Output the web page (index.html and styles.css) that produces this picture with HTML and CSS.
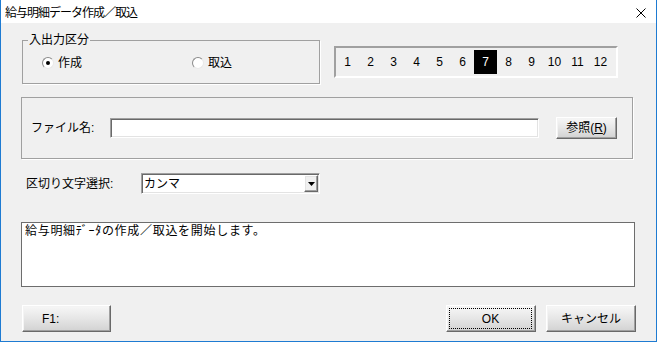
FILE: index.html
```html
<!DOCTYPE html>
<html lang="ja">
<head>
<meta charset="utf-8">
<title>給与明細データ作成／取込</title>
<link rel="stylesheet" href="styles.css">
</head>
<body>
<div class="window">
  <div class="titlebar">
    <span class="title">給与明細データ作成／取込</span>
    <span class="close"><svg width="10" height="10" viewBox="0 0 10 10"><path d="M0.5 0.5 L9.5 9.5 M9.5 0.5 L0.5 9.5" stroke="#000" stroke-width="1" fill="none"/></svg></span>
  </div>
  <div class="content">
    <div class="row-top">
      <div class="group io">
        <div class="legend">入出力区分</div>
        <div class="radios">
          <label class="radio-item first"><span class="radio checked"></span><span>作成</span></label>
          <label class="radio-item"><span class="radio"></span><span>取込</span></label>
        </div>
      </div>
      <div class="months">
        <span class="m">1</span><span class="m">2</span><span class="m">3</span><span class="m">4</span><span class="m">5</span><span class="m">6</span><span class="m sel">7</span><span class="m">8</span><span class="m">9</span><span class="m">10</span><span class="m">11</span><span class="m">12</span>
      </div>
    </div>
    <div class="group file">
      <span class="file-label">ファイル名:</span>
      <span class="input"></span>
      <span class="btn browse">参照(<u>R</u>)</span>
    </div>
    <div class="row-sep">
      <span class="sep-label">区切り文字選択:</span>
      <span class="combo"><span class="combo-text">カンマ</span><span class="combo-btn"><svg width="7" height="4" viewBox="0 0 7 4"><path d="M0 0 H7 L3.5 4 Z" fill="#000"/></svg></span></span>
    </div>
    <div class="message">給与明細ﾃﾞｰﾀの作成／取込を開始します。</div>
    <div class="row-buttons">
      <span class="btn f1">F1:</span>
      <span class="btn ok"><span class="focus">OK</span></span>
      <span class="btn cancel">キャンセル</span>
    </div>
  </div>
</div>
</body>
</html>
```
FILE: styles.css
```css
* { box-sizing: border-box; }
html, body { margin: 0; padding: 0; }
body {
  width: 657px;
  height: 342px;
  overflow: hidden;
  background: #f0f0f0;
  font-family: "Liberation Sans", "Noto Sans CJK JP", sans-serif;
  font-size: 12px;
  color: #000;
}
.window {
  width: 657px;
  height: 342px;
  border: 1px solid #1e7bd2;
  border-top: 0;
  background: #f0f0f0;
  display: flex;
  flex-direction: column;
}
.titlebar {
  height: 23px;
  background: #fff;
  display: flex;
  align-items: center;
  justify-content: space-between;
  padding: 3px 0 0 4px;
}
.title { letter-spacing: -1px; line-height: 14px; }
.close {
  width: 30px;
  height: 20px;
  display: flex;
  align-items: center;
  justify-content: center;
}
.close svg { display: block; }
.content {
  padding: 10px 20px 0 20px;
  display: flex;
  flex-direction: column;
}
.row-top { display: flex; align-items: flex-start; }
.group {
  border: 1px solid #a0a0a0;
  box-shadow: 1px 1px 0 #fff;
}
.io {
  margin: 7px 0 0 1px;
  width: 298px;
  height: 44px;
}
.legend {
  margin: -8px 0 0 5px;
  padding: 0 1px;
  width: fit-content;
  background: #f0f0f0;
  line-height: 15px;
}
.radios {
  display: flex;
  margin-top: 8px;
  height: 14px;
  align-items: center;
}
.radio-item {
  display: flex;
  align-items: center;
  gap: 4px;
  line-height: 14px;
}
.radio-item.first { margin-left: 19px; width: 150px; }
.radio {
  width: 12px;
  height: 12px;
  border-radius: 50%;
  border: 1px solid;
  border-color: #8a8a8a #e8e8e8 #e8e8e8 #8a8a8a;
  background: #fff;
  display: flex;
  align-items: center;
  justify-content: center;
}
.radio.checked::before {
  content: "";
  width: 4px;
  height: 4px;
  border-radius: 50%;
  background: #000;
}
.months {
  margin: 13px 0 0 14px;
  width: 284px;
  height: 32px;
  border: 2px solid;
  border-color: #a0a0a0 #fff #fff #a0a0a0;
  padding-top: 2px;
  display: flex;
}
.m {
  width: 23px;
  height: 24px;
  line-height: 24px;
  text-align: center;
}
.m.sel { background: #000; color: #fff; }
.file {
  margin-top: 13px;
  width: 612px;
  height: 62px;
  display: flex;
  align-items: center;
  padding-left: 9px;
}
.file-label { width: 79px; line-height: 14px; }
.input {
  width: 429px;
  height: 20px;
  background: #fff;
  border: 1px solid;
  border-color: #a0a0a0 #fff #fff #a0a0a0;
  box-shadow: inset 1px 1px 0 #696969, inset -1px -1px 0 #e3e3e3;
}
.btn {
  display: flex;
  align-items: center;
  justify-content: center;
  background: linear-gradient(#f7f7f7, #e6e6e6 50%, #d2d2d2);
  border: 1px solid;
  border-color: #fff #696969 #696969 #fff;
  box-shadow: inset -1px -1px 0 #a0a0a0, inset 1px 1px 0 #f4f4f4;
  line-height: 14px;
}
.browse {
  margin-left: 17px;
  width: 61px;
  height: 22px;
}
.row-sep {
  margin-top: 14px;
  display: flex;
  align-items: center;
}
.sep-label { margin-left: 5px; width: 115px; line-height: 14px; }
.combo {
  width: 179px;
  height: 21px;
  background: #fff;
  border: 1px solid;
  border-color: #a0a0a0 #fff #fff #a0a0a0;
  box-shadow: inset 1px 1px 0 #696969, inset -1px -1px 0 #e3e3e3;
  display: flex;
  align-items: center;
  justify-content: space-between;
  padding: 1px 1px 1px 2px;
}
.combo-text { line-height: 14px; }
.combo-btn {
  width: 14px;
  height: 17px;
  background: #f0f0f0;
  border: 1px solid;
  border-color: #fff #696969 #696969 #fff;
  box-shadow: inset -1px -1px 0 #a0a0a0, inset 1px 1px 0 #e3e3e3;
  display: flex;
  align-items: center;
  justify-content: center;
}
.combo-btn svg { display: block; }
.message {
  margin-top: 28px;
  width: 614px;
  height: 65px;
  background: #fff;
  border: 1px solid #6d6d6d;
  padding: 1px 3px;
  line-height: 14px;
  letter-spacing: 0.7px;
}
.row-buttons {
  margin-top: 18px;
  display: flex;
}
.f1 {
  margin-left: 1px;
  width: 89px;
  height: 27px;
  justify-content: flex-start;
  padding-left: 19px;
}
.ok {
  margin-left: auto;
  width: 90px;
  height: 27px;
  padding: 2px 3px 2px 2px;
  align-items: stretch;
}
.focus {
  flex: 1;
  border: 1px dotted #000;
  display: flex;
  align-items: center;
  justify-content: center;
}
.cancel {
  margin-left: 10px;
  width: 90px;
  height: 27px;
}
```
